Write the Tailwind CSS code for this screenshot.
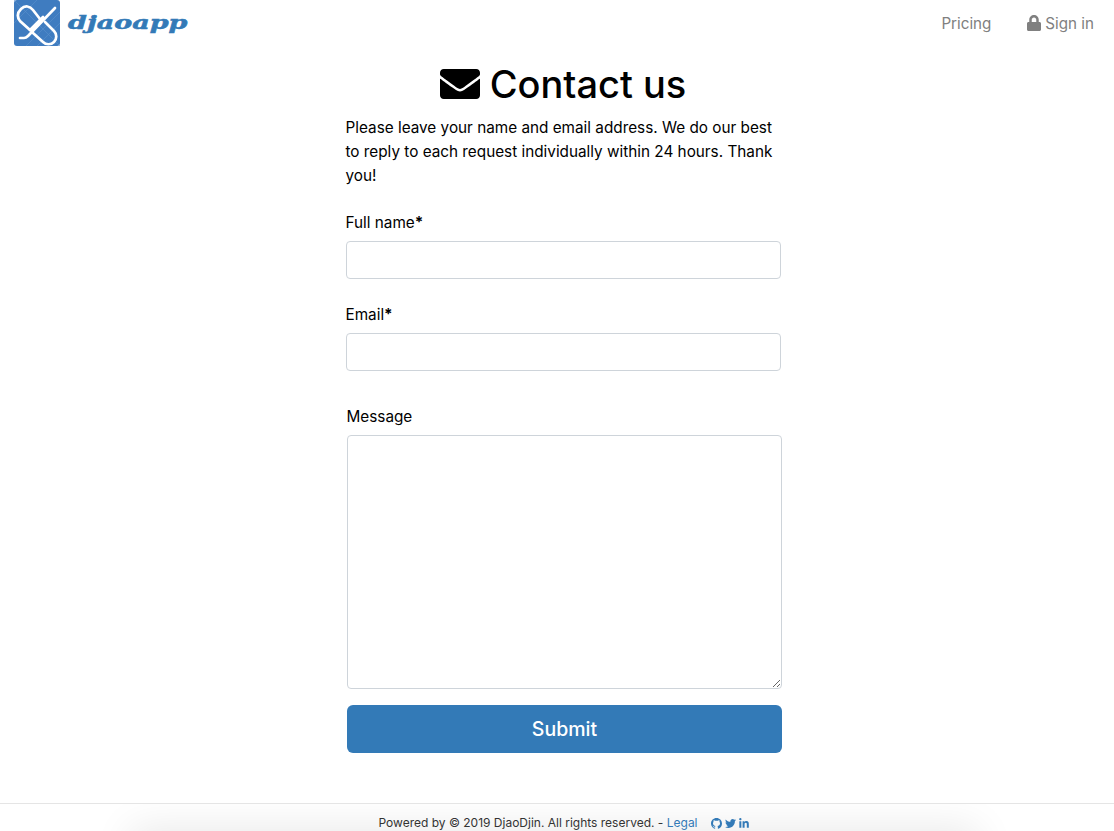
<!DOCTYPE html>
<html lang="en">
<head>
    <meta charset="UTF-8">
    <meta name="viewport" content="width=device-width, initial-scale=1.0">
    <title>Contact us | djaoapp</title>
    <script src="https://cdn.jsdelivr.net/npm/@tailwindcss/browser@4"></script>
</head>
<body class="h-[831px] overflow-hidden flex flex-col bg-white text-black font-['Inter',sans-serif]">
    <!-- Top bar -->
    <nav class="h-[46px] flex items-center justify-between pl-[14px] pr-5">
        <a href="#" class="flex items-center gap-2">
            <svg class="w-[46px] h-[46px]" viewBox="0 0 46 46" fill="none">
                <rect width="46" height="46" rx="3" fill="#3f7cc0"/>
                <path d="M0 23 23 0M23 46 46 23M0 0 46 46M12 46 46 12" stroke="#5b90cb" stroke-width=".6"/>
                <path d="M6 38h4c2 0 3-1 4-2L41 8M16 30 29 17" stroke="#fff" stroke-width="2.700" stroke-linecap="round"/>
                <path d="M26 19 19 10c-3-4-8-5-12-1s-4 8-1 12l10 9" stroke="#fff" stroke-width="2.700" stroke-linecap="round"/>
                <path d="M31 22 40 31c3 3 3 8 0 11s-8 3-11 0l-10-9" stroke="#fff" stroke-width="2.700" stroke-linecap="round"/>
            </svg>
            <span class="origin-left scale-x-[1.500] font-['DejaVu_Serif',serif] font-bold italic text-[18px] leading-none text-[#337ab7] [-webkit-text-stroke:0.5px_#337ab7]">djaoapp</span>
        </a>
        <div class="flex items-center gap-9 pt-0.5 text-[15.2px] text-[#808080]">
            <a href="#">Pricing</a>
            <a href="#" class="flex items-center gap-1">
                <svg class="w-[14px] h-4 -mt-0.5" viewBox="0 0 448 512" fill="currentColor"><path d="M400 224h-24v-72C376 68.2 307.8 0 224 0S72 68.2 72 152v72H48c-26.5 0-48 21.5-48 48v192c0 26.5 21.500 48 48 48h352c26.500 0 48-21.500 48-48V272c0-26.500-21.500-48-48-48zm-104 0H152v-72c0-39.700 32.300-72 72-72s72 32.300 72 72v72z"/></svg>
                Sign in
            </a>
        </div>
    </nav>

    <!-- Contact form -->
    <main class="flex-1 w-[436px] ml-[346px]">
        <h1 class="flex items-center justify-center gap-[10px] h-[60px] mt-2 -ml-0.5 text-[38px] leading-none font-[450]">
            <svg class="w-10 h-10" viewBox="0 0 512 512" fill="currentColor"><path d="M502.300 190.800c3.900-3.100 9.700-.2 9.700 4.700V400c0 26.500-21.500 48-48 48H48c-26.500 0-48-21.500-48-48V195.600c0-5 5.700-7.800 9.700-4.700 22.400 17.400 52.100 39.500 154.100 113.600 21.100 15.400 56.700 47.800 92.200 47.600 35.700.3 72-32.800 92.300-47.600 102-74.100 131.600-96.300 154-113.700zM256 320c23.200.4 56.600-29.200 73.400-41.400 132.700-96.300 142.800-104.700 173.400-128.700 5.800-4.500 9.200-11.500 9.200-18.900v-19c0-26.500-21.500-48-48-48H48C21.500 64 0 85.500 0 112v19c0 7.400 3.400 14.300 9.200 18.900 30.600 23.900 40.700 32.400 173.400 128.700 16.800 12.200 50.200 41.800 73.400 41.400z"/></svg>
            Contact us
        </h1>
        <p class="text-[15.300px] leading-6 w-[435px] mt-0.5 -ml-[0.5px]">Please leave your name and email address. We do our best to reply to each request individually within 24 hours. Thank you!</p>

        <form class="mt-[22px]">
            <label class="block text-[15.300px] leading-6 pt-px mb-[6px] -ml-[0.5px] h-[25px]">Full name<b>*</b></label>
            <input type="text" class="block w-[435px] h-[38px] border border-[#ced4da] rounded bg-white">
            <label class="block text-[15.300px] leading-6 pt-px mt-[23px] mb-[6px] -ml-[0.5px] h-[25px]">Email<b>*</b></label>
            <input type="email" class="block w-[435px] h-[38px] border border-[#ced4da] rounded bg-white">
            <div class="ml-px mt-[33px]">
                <label class="block text-[15.300px] leading-6 pt-px mb-[6px] -ml-[0.5px] h-[25px]">Message</label>
                <textarea class="block w-[435px] h-[254px] border border-[#ced4da] rounded bg-white"></textarea>
                <button type="button" class="block w-[435px] h-12 pt-0.5 mt-4 rounded-md bg-[#337ab7] text-white text-[19.500px] font-medium">Submit</button>
            </div>
        </form>
    </main>

    <!-- Footer -->
    <footer class="relative h-[28px] overflow-hidden border-t border-[#e5e5e5] flex justify-center pt-[11px] pl-[13px] text-xs leading-4 text-[#333]">
        <div class="absolute left-[145px] right-[150px] top-[38px] h-10 shadow-[0_0_40px_14px_rgba(0,0,0,0.09)]"></div>
        <p class="relative flex items-center">
            Powered by © 2019 DjaoDjin. All rights reserved. -&nbsp;<a href="#" class="text-[#337ab7]">Legal</a>
            <span class="flex items-center gap-[3px] ml-[13px] text-[#337ab7]">
                <svg class="w-[11px] h-[11px]" viewBox="0 0 16 16" fill="currentColor"><path d="M8 0C3.58 0 0 3.58 0 8c0 3.54 2.29 6.53 5.47 7.59.4.07.55-.17.55-.38 0-.19-.01-.82-.01-1.49-2.010.37-2.530-.49-2.690-.94-.09-.23-.48-.94-.82-1.130-.28-.15-.68-.52-.01-.53.63-.01 1.080.58 1.230.82.72 1.210 1.870.87 2.330.66.07-.52.28-.87.51-1.070-1.780-.2-3.640-.89-3.640-3.950 0-.87.31-1.590.82-2.150-.08-.2-.36-1.020.08-2.120 0 0 .67-.21 2.200.82.64-.18 1.320-.27 2-.27.68 0 1.360.09 2 .27 1.530-1.040 2.200-.82 2.200-.82.44 1.100.16 1.920.08 2.120.51.56.82 1.270.82 2.150 0 3.070-1.870 3.750-3.650 3.950.29.25.54.73.54 1.480 0 1.070-.01 1.930-.01 2.200 0 .21.15.46.55.38A8.013 8.013 0 0016 8c0-4.420-3.580-8-8-8z"/></svg>
                <svg class="w-[11px] h-[11px]" viewBox="0 0 512 512" fill="currentColor"><path d="M459.370 151.716c.325 4.548.325 9.097.325 13.645 0 138.720-105.583 298.558-298.558 298.558-59.452 0-114.680-17.219-161.137-47.106 8.447.974 16.568 1.299 25.340 1.299 49.055 0 94.213-16.568 130.274-44.832-46.132-.975-84.792-31.188-98.112-72.772 6.498.974 12.995 1.624 19.818 1.624 9.421 0 18.843-1.300 27.614-3.573-48.081-9.747-84.143-51.980-84.143-102.985v-1.299c13.969 7.797 30.214 12.670 47.431 13.319-28.264-18.843-46.781-51.005-46.781-87.391 0-19.492 5.197-37.360 14.294-52.954 51.655 63.675 129.300 105.258 216.365 109.807-1.624-7.797-2.599-15.918-2.599-24.040 0-57.828 46.782-104.934 104.934-104.934 30.213 0 57.502 12.670 76.670 33.137 23.715-4.548 46.456-13.320 66.599-25.340-7.798 24.366-24.366 44.833-46.132 57.827 21.117-2.273 41.584-8.122 60.426-16.243-14.292 20.791-32.161 39.308-52.628 54.253z"/></svg>
                <svg class="w-[10px] h-[11px]" viewBox="0 0 448 512" fill="currentColor"><path d="M100.280 448H7.400V148.900h92.880zM53.790 108.100C24.090 108.100 0 83.500 0 53.800a53.790 53.790 0 0 1 107.580 0c0 29.700-24.100 54.300-53.790 54.300zM447.900 448h-92.680V302.400c0-34.700-.7-79.200-48.290-79.200-48.290 0-55.690 37.700-55.690 76.700V448h-92.780V148.900h89.080v40.800h1.300c12.400-23.500 42.690-48.300 87.880-48.300 94 0 111.280 61.900 111.280 142.300V448z"/></svg>
            </span>
        </p>
    </footer>
</body>
</html>
